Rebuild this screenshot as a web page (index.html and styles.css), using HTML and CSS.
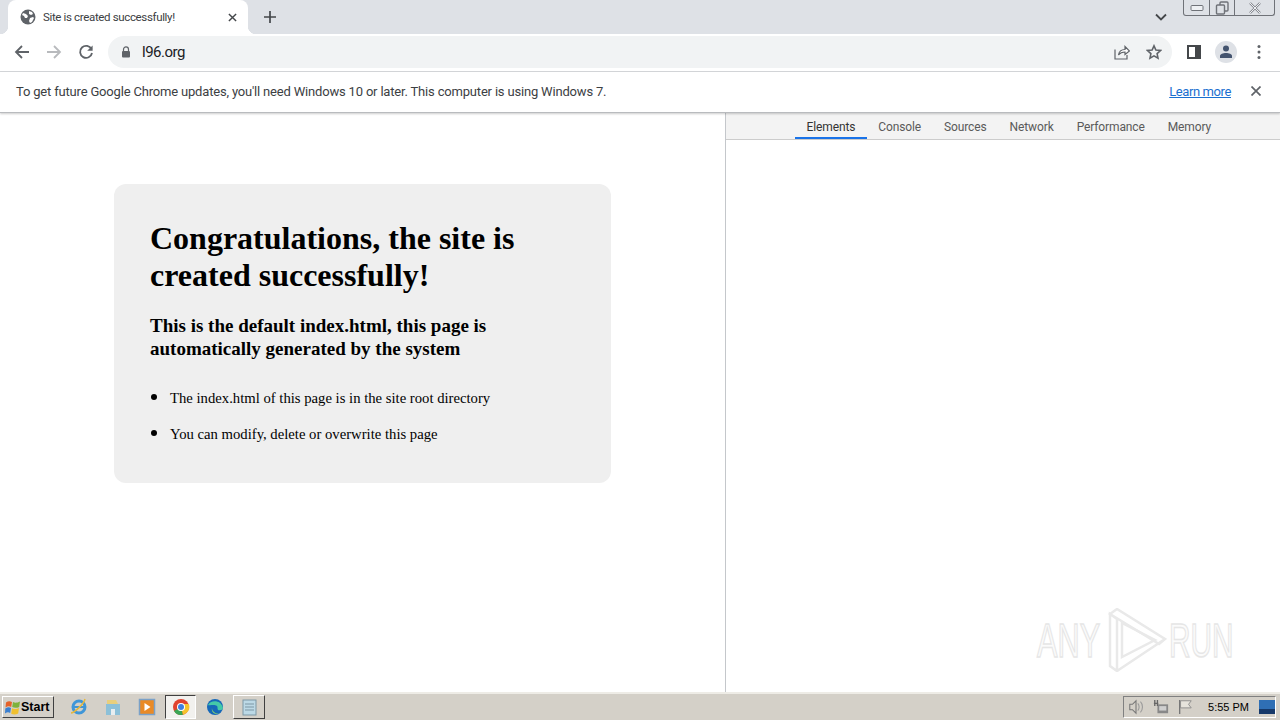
FILE: index.html
```html
<!DOCTYPE html>
<html lang="en">
<head>
    <meta charset="UTF-8">
    <title>Site is created successfully!</title>
    <link rel="stylesheet" href="styles.css">
</head>
<body>
    <div class="tabstrip">
        <div class="tab">
            <svg class="favicon" viewBox="0 0 16 16"><circle cx="8" cy="8" r="7.500" fill="#5f6368"/><path d="M3 4l3 1 2 2-1 2-2 0-1-2-2-1zM9 2l3 1 1 2-2 1-2-1zM10 9l3-1 1 1-2 4-2 1-1-2z" fill="#fff"/></svg>
            <span class="tab-title">Site is created successfully!</span>
            <svg class="tab-close" viewBox="0 0 10 10"><path d="M1 1l8 8M9 1l-8 8" stroke="#44474a" stroke-width="1.600" fill="none"/></svg>
        </div>
        <svg class="new-tab" viewBox="0 0 12 12"><path d="M6 0v12M0 6h12" stroke="#44474a" stroke-width="1.700" fill="none"/></svg>
        <svg class="tab-search" viewBox="0 0 12 8"><path d="M1 1.500l5 5 5-5" stroke="#44474a" stroke-width="1.800" fill="none"/></svg>
        <div class="window-btns">
            <div class="win-btn win-min"><svg viewBox="0 0 14 8" width="14" height="8"><rect x="1" y="1.500" width="12" height="5" rx="1" fill="#eef0f3" stroke="#6f7278"/></svg></div>
            <div class="win-btn win-max"><svg viewBox="0 0 14 14" width="14" height="14"><rect x="5" y="1" width="8" height="9" rx="1" fill="none" stroke="#6f7278" stroke-width="1.400"/><rect x="1.500" y="4" width="8" height="9" rx="1" fill="#dee1e6" stroke="#6f7278" stroke-width="1.400"/></svg></div>
            <div class="win-btn win-x"><svg viewBox="0 0 14 12" width="14" height="12"><path d="M2 1l10 10M12 1L2 11" stroke="#85888e" stroke-width="2.400" fill="none"/><path d="M2 1l10 10M12 1L2 11" stroke="#eef0f3" stroke-width="1" fill="none"/></svg></div>
        </div>
    </div>

    <div class="toolbar">
        <svg class="nav-icon" viewBox="0 0 16 16"><path d="M15 8H2M8 2L2 8l6 6" stroke="#5f6368" stroke-width="1.800" fill="none"/></svg>
        <svg class="nav-icon" viewBox="0 0 16 16"><path d="M1 8h13M8 2l6 6-6 6" stroke="#b8babd" stroke-width="1.800" fill="none"/></svg>
        <svg class="nav-icon" viewBox="0 0 16 16"><path d="M13.500 5.200A6 6 0 1 0 14 9" stroke="#5f6368" stroke-width="1.800" fill="none"/><path d="M14.600 1.400v5.400H9.200z" fill="#5f6368"/></svg>
        <div class="omnibox">
            <svg class="lock" viewBox="0 0 10 12"><path d="M2.500 5V3.400a2.500 2.500 0 0 1 5 0V5" stroke="#5f6368" stroke-width="1.200" fill="none"/><rect x="1" y="5" width="8" height="6.500" rx="1" fill="#5f6368"/></svg>
            <span class="url">l96.org</span>
            <svg class="share" viewBox="0 0 16 16"><path d="M1 5.500V15h12v-4" stroke="#5f6368" stroke-width="1.200" fill="none"/><path d="M4.500 11c.5-3.500 3-5.500 6.500-5.500V2.500L15.500 7 11 10.500V8C8 8 6 9 4.500 11z" fill="#fff" stroke="#5f6368" stroke-width="1.200"/></svg>
            <svg class="star" viewBox="0 0 16 16"><path d="M8 1.800l1.900 4.200 4.600.5-3.400 3.100.9 4.500L8 11.800l-4 2.300.9-4.500L1.500 6.500l4.600-.5z" fill="none" stroke="#5f6368" stroke-width="1.600"/></svg>
        </div>
        <svg class="side-panel" viewBox="0 0 14 14"><rect x="1" y="1" width="12" height="12" fill="none" stroke="#44474a" stroke-width="2"/><rect x="8" y="1" width="5" height="12" fill="#44474a"/></svg>
        <div class="avatar">
            <svg viewBox="0 0 14 14" width="14" height="14"><circle cx="7" cy="3.600" r="3" fill="#44546f"/><path d="M1 13v-2c0-2 3-3 6-3s6 1 6 3v2z" fill="#44546f"/></svg>
        </div>
        <svg class="menu-dots" viewBox="0 0 4 16"><circle cx="2" cy="2.500" r="1.500" fill="#5f6368"/><circle cx="2" cy="8" r="1.500" fill="#5f6368"/><circle cx="2" cy="13.500" r="1.500" fill="#5f6368"/></svg>
    </div>

    <div class="infobar">
        <span class="info-text">To get future Google Chrome updates, you'll need Windows 10 or later. This computer is using Windows 7.</span>
        <a class="learn-more" href="#">Learn more</a>
        <svg class="info-close" viewBox="0 0 10 10"><path d="M.5.5l9 9M9.500.5l-9 9" stroke="#5f6368" stroke-width="1.700" fill="none"/></svg>
    </div>

    <div class="content">
        <div class="page">
            <div class="card">
                <h1>Congratulations, the site is created successfully!</h1>
                <h3>This is the default index.html, this page is automatically generated by the system</h3>
                <ul>
                    <li>The index.html of this page is in the site root directory</li>
                    <li>You can modify, delete or overwrite this page</li>
                </ul>
            </div>
        </div>
        <div class="devtools">
            <div class="dev-tabs">
                <span class="dev-tab active">Elements</span>
                <span class="dev-tab">Console</span>
                <span class="dev-tab">Sources</span>
                <span class="dev-tab">Network</span>
                <span class="dev-tab">Performance</span>
                <span class="dev-tab">Memory</span>
            </div>
        </div>
    </div>

    <div class="watermark">
        <span class="wm-any">ANY</span>
        <svg viewBox="0 0 60 64" width="60" height="64"><path d="M3 6l7-5 48 30-6 5zM3 6v52l7 5V11zM10 63l48-32" fill="none" stroke="#e9e9e9" stroke-width="2.500"/><path d="M15 15l33 17-33 17z" fill="none" stroke="#e9e9e9" stroke-width="2.500"/></svg>
        <span class="wm-run">RUN</span>
    </div>

    <div class="taskbar">
        <div class="start-btn">
            <svg viewBox="0 0 16 16" width="16" height="16"><path d="M1 3.500C3 2 5 2 7 3L6.200 8C4.500 7 2.500 7 .5 8.500z" fill="#e5622a"/><path d="M8 3c2 1 4 1 7-.5L14.200 8c-2.500 1.200-5 1-7 0z" fill="#7eb23b"/><path d="M.3 9.500C2.500 8 4.500 8 6 9l-.8 5C3.500 13 2 13 0 14.500z" fill="#3a7fd0"/><path d="M7 9.300c2 1 4.500 1 7-.2L13.200 14.500c-2.500 1.300-5 1.200-7 .2z" fill="#f0c02f"/></svg>
            <span>Start</span>
        </div>
        <div class="quick">
            <svg class="task-icon" viewBox="0 0 18 18"><circle cx="9" cy="9" r="6" fill="none" stroke="#3f96d8" stroke-width="3"/><path d="M4 9h10" stroke="#3f96d8" stroke-width="2"/><path d="M1 15C4 15 14 6 15 1" stroke="#e6b83c" stroke-width="1.500" fill="none"/></svg>
            <svg class="task-icon" viewBox="0 0 18 18"><path d="M2 6h14v11H2z" fill="#8cc0d8"/><path d="M3 2h9l2 4H3z" fill="#e9cf7c"/><rect x="7" y="11" width="4" height="6" fill="#e8eef0"/></svg>
            <svg class="task-icon" viewBox="0 0 18 18"><rect x="1.500" y="1.500" width="15" height="15" fill="#e98a26" stroke="#7aa1c8" stroke-width="1.500"/><path d="M6.500 5l6 4-6 4z" fill="#fff"/></svg>
            <div class="task-active">
                <svg viewBox="0 0 18 18" width="18" height="18"><circle cx="9" cy="9" r="8" fill="#e0432f"/><path d="M9 9L2 13a8 8 0 0 0 9 3.700z" fill="#3aa655"/><path d="M9 9l2 7.700A8 8 0 0 0 16.800 6H9z" fill="#f6c32c"/><circle cx="9" cy="9" r="4" fill="#fff"/><circle cx="9" cy="9" r="3" fill="#3f7fe0"/></svg>
            </div>
            <svg class="task-icon" viewBox="0 0 18 18"><circle cx="9" cy="9" r="8" fill="#1668b8"/><path d="M2 7c2-5 13-6 15 3 0 2-3 2.500-5 2-1-2 0-3-1-4-3-2-7 0-9-1z" fill="#45c9a8"/><path d="M6 10c0 4 4 6 8 5-4 2-9 0-8-5z" fill="#8fdc6a"/></svg>
            <div class="task-notepad">
                <svg viewBox="0 0 18 18" width="18" height="18"><rect x="3" y="2" width="13" height="15" fill="#bcd9e6" stroke="#7d97a5"/><path d="M5 6h9M5 9h9M5 12h9" stroke="#7d97a5"/></svg>
            </div>
        </div>
        <div class="tray">
            <svg class="tray-icon" viewBox="0 0 18 18"><path d="M2 6h3l4-4v14l-4-4H2z" fill="none" stroke="#777" stroke-width="1.200"/><path d="M11 5c2 2 2 6 0 8M14 3c3 3 3 9 0 12" fill="none" stroke="#999" stroke-width="1.200"/></svg>
            <svg class="tray-icon" viewBox="0 0 18 18"><rect x="5" y="6" width="12" height="10" fill="#888"/><rect x="7" y="8" width="8" height="5" fill="#cfcfcf"/><path d="M2 1v7M5 1v7M1 5h5" stroke="#666" stroke-width="1.500" fill="none"/></svg>
            <svg class="tray-icon" viewBox="0 0 18 18"><path d="M3 1v16" stroke="#777" stroke-width="1.500"/><path d="M4 2h12l-3 4 3 4H4z" fill="#e6e3dc" stroke="#888"/></svg>
            <span class="clock">5:55 PM</span>
            <svg class="show-desktop" viewBox="0 0 16 14"><rect width="16" height="14" fill="#2f6fb5"/><rect y="9" width="16" height="5" fill="#16396a"/></svg>
        </div>
    </div>
</body>
</html>
```

FILE: styles.css
```css
html, body {
    margin: 0;
    height: 720px;
    overflow: hidden;
}
body {
    display: flex;
    flex-direction: column;
    position: relative;
    background-color: #fff;
    font-family: Roboto, "Noto Sans", sans-serif;
}
svg {
    display: block;
    flex-shrink: 0;
}

/* tab strip */
.tabstrip {
    height: 34px;
    display: flex;
    align-items: center;
    background-color: #dee1e6;
    padding-left: 8px;
}
.tab {
    position: relative;
    width: 240px;
    height: 34px;
    box-sizing: border-box;
    display: flex;
    align-items: center;
    padding: 0 11px 0 12px;
    background-color: #fff;
    border-radius: 8px 8px 0 0;
}
.tab::before, .tab::after {
    content: "";
    position: absolute;
    bottom: 0;
    width: 8px;
    height: 8px;
}
.tab::before {
    left: -8px;
    background: radial-gradient(circle at 0 0, #dee1e6 8px, #fff 8.500px);
}
.tab::after {
    right: -8px;
    background: radial-gradient(circle at 100% 0, #dee1e6 8px, #fff 8.500px);
}
.favicon {
    width: 16px;
    height: 16px;
}
.tab-title {
    margin-left: 7px;
    font-size: 11.500px;
    letter-spacing: -0.35px;
    color: #3c4043;
    flex: 1;
    white-space: nowrap;
}
.tab-close {
    width: 9px;
    height: 9px;
}
.new-tab {
    width: 12px;
    height: 12px;
    margin-left: 16px;
}
.tab-search {
    width: 12px;
    height: 8px;
    margin-left: auto;
}
.window-btns {
    align-self: flex-start;
    display: flex;
    margin: 0 5px 0 16px;
    width: 92px;
    height: 16px;
    box-sizing: border-box;
    border: 1px solid #6f7278;
    border-top: none;
    border-radius: 0 0 3px 3px;
}
.win-btn {
    display: flex;
    align-items: center;
    justify-content: center;
}
.win-min {
    width: 25px;
    border-right: 1px solid #6f7278;
}
.win-max {
    width: 24px;
    border-right: 1px solid #6f7278;
}
.win-x {
    flex: 1;
}

/* toolbar */
.toolbar {
    height: 38px;
    box-sizing: border-box;
    display: flex;
    align-items: center;
    padding: 0 0 2px 14px;
    background-color: #fff;
    border-bottom: 1px solid #d5d7da;
}
.nav-icon {
    width: 16px;
    height: 16px;
    margin-right: 16px;
}
.omnibox {
    width: 1064px;
    height: 32px;
    box-sizing: border-box;
    margin-left: -2px;
    display: flex;
    align-items: center;
    padding: 0 10px 0 13px;
    background-color: #f1f3f4;
    border-radius: 16px;
}
.lock {
    width: 10px;
    height: 12px;
}
.url {
    margin-left: 11px;
    font-size: 15px;
    letter-spacing: -0.5px;
    color: #202124;
    flex: 1;
}
.share {
    width: 16px;
    height: 16px;
    margin-right: 16px;
}
.star {
    width: 16px;
    height: 16px;
}
.side-panel {
    width: 14px;
    height: 14px;
    margin-left: 15px;
}
.avatar {
    width: 22px;
    height: 22px;
    margin-left: 14px;
    display: flex;
    align-items: center;
    justify-content: center;
    background-color: #dee1e6;
    border-radius: 50%;
}
.menu-dots {
    width: 4px;
    height: 16px;
    margin-left: 20px;
}

/* infobar */
.infobar {
    height: 41px;
    box-sizing: border-box;
    display: flex;
    align-items: center;
    padding: 0 19px 2px 16px;
    background-color: #fff;
    border-bottom: 1px solid #b9bbbe;
    box-shadow: 0 1px 2px rgba(0, 0, 0, 0.2);
    position: relative;
}
.info-text {
    font-size: 13px;
    letter-spacing: -0.18px;
    color: #3c4043;
    flex: 1;
}
.learn-more {
    font-size: 13px;
    letter-spacing: -0.4px;
    color: #1a6fd0;
}
.info-close {
    width: 10px;
    height: 10px;
    margin-left: 20px;
}

/* page area */
.content {
    flex: 1;
    display: flex;
    min-height: 0;
}
.page {
    width: 726px;
    box-sizing: border-box;
    padding: 71px 0 0 114px;
    border-right: 1px solid #c4c7cb;
}
.card {
    width: 497px;
    height: 299px;
    box-sizing: border-box;
    padding: 36px 36px 0;
    background-color: #efefef;
    border-radius: 12px;
    color: #000;
    font-family: "Liberation Serif", serif;
}
h1 {
    margin: 0;
    font-size: 32px;
    line-height: 37px;
}
h3 {
    margin: 20px 0 0;
    font-size: 19px;
    line-height: 23px;
}
ul {
    margin: 18px 0 0;
    padding-left: 20px;
    font-size: 14.700px;
}
li {
    height: 36px;
    line-height: 36px;
}
li::marker {
    font-size: 20px;
}
.devtools {
    flex: 1;
}
.dev-tabs {
    height: 27px;
    box-sizing: border-box;
    display: flex;
    padding-left: 69px;
    background-color: #f3f3f3;
    border-bottom: 1px solid #ccc;
    font-size: 12px;
    letter-spacing: -0.12px;
    color: #5a5a5a;
}
.dev-tab {
    padding: 0 11.500px;
    line-height: 29px;
    height: 26px;
    box-sizing: border-box;
}
.dev-tab.active {
    color: #333;
    border-bottom: 2px solid #1a73e8;
}

/* watermark over the page */
.watermark {
    position: absolute;
    left: 1037px;
    top: 608px;
    display: flex;
    align-items: center;
    font-family: "Liberation Sans", sans-serif;
    font-size: 48px;
    color: #fbfbfb;
    -webkit-text-stroke: 1.500px #e6e6e6;
}
.watermark span {
    display: block;
    white-space: nowrap;
    transform-origin: left center;
}
.wm-any {
    width: 70px;
    transform: scaleX(0.64);
}
.wm-run {
    width: 65px;
    margin-left: 2px;
    transform: scaleX(0.62);
}

/* windows taskbar */
.taskbar {
    height: 28px;
    box-sizing: border-box;
    display: flex;
    align-items: center;
    background-color: #d4d0c8;
    border-top: 2px solid #eeece6;
    padding: 0 4px 0 2px;
}
.start-btn {
    width: 52px;
    height: 22px;
    box-sizing: border-box;
    display: flex;
    align-items: center;
    padding-left: 2px;
    background-color: #d4d0c8;
    border: 1px solid;
    border-color: #fff #404040 #404040 #fff;
    font-family: "Liberation Sans", sans-serif;
    font-size: 12.500px;
    font-weight: bold;
    color: #000;
}
.quick {
    display: flex;
    align-items: center;
    margin-left: 16px;
}
.task-icon {
    width: 18px;
    height: 18px;
    margin-right: 16px;
}
.task-active {
    width: 31px;
    height: 24px;
    box-sizing: border-box;
    margin-left: -7px;
    margin-right: 10px;
    display: flex;
    align-items: center;
    justify-content: center;
    background-color: #f2f1ee;
    border: 1px solid;
    border-color: #404040 #fff #fff #404040;
}
.task-notepad {
    width: 32px;
    height: 24px;
    box-sizing: border-box;
    margin-left: -7px;
    display: flex;
    align-items: center;
    justify-content: center;
    border: 1px solid;
    border-color: #fff #404040 #404040 #fff;
}
.tray {
    margin-left: auto;
    height: 22px;
    box-sizing: border-box;
    display: flex;
    align-items: center;
    padding-left: 4px;
    border: 1px solid;
    border-color: #808080 #fff #fff #808080;
}
.tray-icon {
    width: 16px;
    height: 16px;
    margin-right: 8.500px;
}
.clock {
    margin-left: 6.500px;
    font-family: "Liberation Sans", sans-serif;
    font-size: 11px;
    color: #000;
}
.show-desktop {
    width: 16px;
    height: 14px;
    margin-left: 10px;
}
```
